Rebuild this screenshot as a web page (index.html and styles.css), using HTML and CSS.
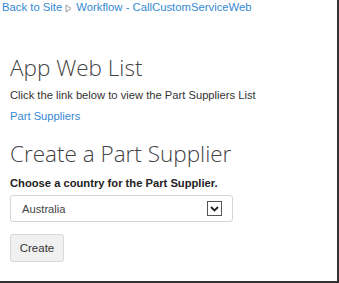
FILE: index.html
```html
<html>
    <head>
        <link rel="stylesheet" href="styles.css">
    </head>
    <body>
        <div class="page">
            <div class="breadcrumb">
                <a href="#">Back to Site</a>
                <svg class="crumb-arrow" width="7" height="9" viewBox="0 0 7 9"><path d="M1 1 L6 4.5 L1 8 Z" fill="none" stroke="#9a9a9a" stroke-width="1"/></svg>
                <a href="#">Workflow - CallCustomServiceWeb</a>
            </div>
            <div class="content">
                <h1 class="title">App Web List</h1>
                <p class="intro">Click the link below to view the Part Suppliers List</p>
                <a class="list-link" href="#">Part Suppliers</a>
                <h2 class="title second">Create a Part Supplier</h2>
                <label class="field-label">Choose a country for the Part Supplier.</label>
                <div class="select">
                    <span>Australia</span>
                    <svg class="select-arrow" width="15" height="15" viewBox="0 0 15 15"><rect x="0.5" y="0.5" width="14" height="14" fill="#fff" stroke="#555"/><path d="M4 6 L7.5 9.5 L11 6" fill="none" stroke="#222" stroke-width="1.8"/></svg>
                </div>
                <a class="btn" href="#">Create</a>
            </div>
        </div>
    </body>
</html>
```

FILE: styles.css
```css
body {
    margin: 0;
    font-family: "Liberation Sans", Arial, sans-serif;
    font-size: 11.2px;
    color: #333;
}

a {
    color: #3489d3;
    text-decoration: none;
}

.page {
    width: 339px;
    height: 283px;
    box-sizing: border-box;
    border-right: 2px solid #333;
    border-bottom: 2px solid #333;
    overflow: hidden;
}

.breadcrumb {
    padding: 1px 0 0 2px;
    font-size: 11.3px;
    line-height: 13px;
    display: flex;
    align-items: center;
    gap: 2px;
}

.crumb-arrow {
    margin: 2px 2px 0 1px;
}

.content {
    padding-left: 10px;
}

.title {
    font-family: "Open Sans", sans-serif;
    font-weight: 300;
    font-size: 22.5px;
    line-height: 30px;
    color: #444;
    margin: 39px 0 0 0;
}

.title.second {
    margin-top: 16px;
}

.intro {
    margin: 4px 0 0 0;
    line-height: 16px;
}

.list-link {
    display: block;
    margin-top: 6px;
    line-height: 14px;
}

.field-label {
    display: block;
    font-weight: bold;
    color: #222;
    margin-top: 7px;
    line-height: 14px;
}

.select {
    width: 223px;
    height: 27px;
    box-sizing: border-box;
    margin-top: 5px;
    border: 1px solid #d4d4d4;
    border-radius: 3px;
    display: flex;
    align-items: center;
    justify-content: space-between;
    padding: 0 10px 0 11px;
    color: #444;
}

.btn {
    display: inline-block;
    margin-top: 12px;
    width: 54px;
    height: 28px;
    box-sizing: border-box;
    line-height: 26px;
    text-align: center;
    background-color: #f0f0f0;
    border: 1px solid #d8d8d8;
    border-radius: 3px;
    color: #333;
    font-size: 11.5px;
}
```
